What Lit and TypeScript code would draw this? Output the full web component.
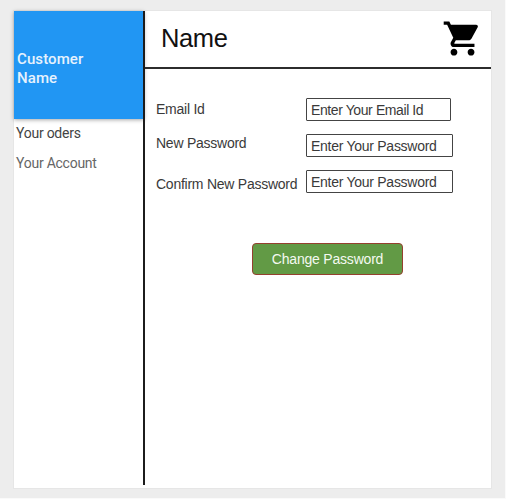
import { LitElement, html, css } from "lit";
import { customElement } from "lit/decorators.js";

@customElement("app-root")
export class AppRoot extends LitElement {
  static styles = css`
    :host {
      display: block;
      box-sizing: border-box;
      width: 506px;
      height: 499px;
      padding: 10px 0 0 13px;
      background: #ededed;
      border-right: 1px solid #fafafa;
      border-bottom: 1px solid #fafafa;
      font-family: "Liberation Sans", Arial, sans-serif;
      color: #3a3a3a;
      overflow: hidden;
    }
    .card {
      box-sizing: border-box;
      width: 479px;
      height: 479px;
      display: flex;
      align-items: flex-start;
      background: #fff;
      border: 1px solid #e6e6e6;
    }
    .side {
      width: 129.5px;
      flex: none;
      font-family: Roboto, sans-serif;
    }
    .customer {
      box-sizing: border-box;
      height: 108px;
      padding: 39px 58px 0 3px;
      background: #2196f3;
      color: #e6f2fd;
      font-size: 15px;
      letter-spacing: 0.1px;
      font-weight: 500;
      line-height: 19px;
      box-shadow: 0 1px 4px rgba(0, 0, 0, 0.35);
    }
    .link {
      display: block;
      padding-left: 2px;
      font-size: 14px;
      letter-spacing: -0.25px;
      line-height: 16px;
      white-space: nowrap;
    }
    .orders {
      margin-top: 6px;
      color: #444;
    }
    .account {
      margin-top: 14px;
      color: #666;
    }
    .main {
      box-sizing: border-box;
      flex: 1;
      height: 474px;
      margin-left: -0.5px;
      border-left: 2px solid #1c1c1c;
    }
    header {
      box-sizing: border-box;
      height: 58px;
      display: flex;
      justify-content: space-between;
      padding: 7px 8px 0 16px;
      border-bottom: 2px solid #2c2c2c;
    }
    h1 {
      margin: 4px 0 0;
      font-size: 25.5px;
      letter-spacing: -0.4px;
      line-height: 32px;
      font-weight: 400;
      color: #111;
    }
    .cart {
      width: 41px;
      height: 41px;
    }
    .form {
      display: grid;
      grid-template-columns: 150px auto;
      grid-auto-rows: 23px;
      justify-items: start;
      row-gap: 13px;
      padding: 29px 0 0 11px;
    }
    label {
      font-size: 14px;
      letter-spacing: -0.25px;
      line-height: 16px;
      padding-top: 3px;
      white-space: nowrap;
    }
    .new {
      padding-top: 1px;
    }
    .confirm {
      padding-top: 6px;
    }
    .field {
      box-sizing: border-box;
      width: 147px;
      height: 23px;
      padding: 0 4px;
      border: 1px solid #444;
      border-radius: 1px;
      line-height: 22px;
      font-size: 14px;
      letter-spacing: -0.27px;
      white-space: nowrap;
    }
    .email {
      width: 145px;
      letter-spacing: -0.4px;
    }
    button {
      display: block;
      box-sizing: border-box;
      width: 151px;
      height: 32px;
      margin: 50px 0 0 107px;
      padding: 0;
      border: 1px solid #94402f;
      border-radius: 4px;
      background: #629a45;
      color: #f4f9f1;
      font: 14px/30px "Liberation Sans", Arial, sans-serif;
      letter-spacing: -0.2px;
    }
  `;

  render() {
    return html`
      <div class="card">
        <nav class="side">
          <div class="customer">Customer Name</div>
          <span class="link orders">Your oders</span>
          <span class="link account">Your Account</span>
        </nav>
        <section class="main">
          <header>
            <h1>Name</h1>
            <svg class="cart" viewBox="0 0 24 24" aria-label="Cart">
              <path
                d="M7 18c-1.1 0-1.99.9-1.99 2S5.9 22 7 22s2-.9 2-2-.9-2-2-2zM1 2v2h2l3.6 7.59-1.35 2.45c-.16.28-.25.61-.25.96 0 1.1.9 2 2 2h12v-2H7.42c-.14 0-.25-.11-.25-.25l.03-.12.9-1.63h7.45c.75 0 1.41-.41 1.75-1.03l3.58-6.49c.08-.14.12-.31.12-.48 0-.55-.45-1-1-1H5.21l-.94-2H1zm16 16c-1.1 0-1.99.9-1.99 2s.89 2 1.99 2 2-.9 2-2-.9-2-2-2z"
              />
            </svg>
          </header>
          <div class="form">
            <label>Email Id</label>
            <div class="field email">Enter Your Email Id</div>
            <label class="new">New Password</label>
            <div class="field">Enter Your Password</div>
            <label class="confirm">Confirm New Password</label>
            <div class="field">Enter Your Password</div>
          </div>
          <button>Change Password</button>
        </section>
      </div>
    `;
  }
}
